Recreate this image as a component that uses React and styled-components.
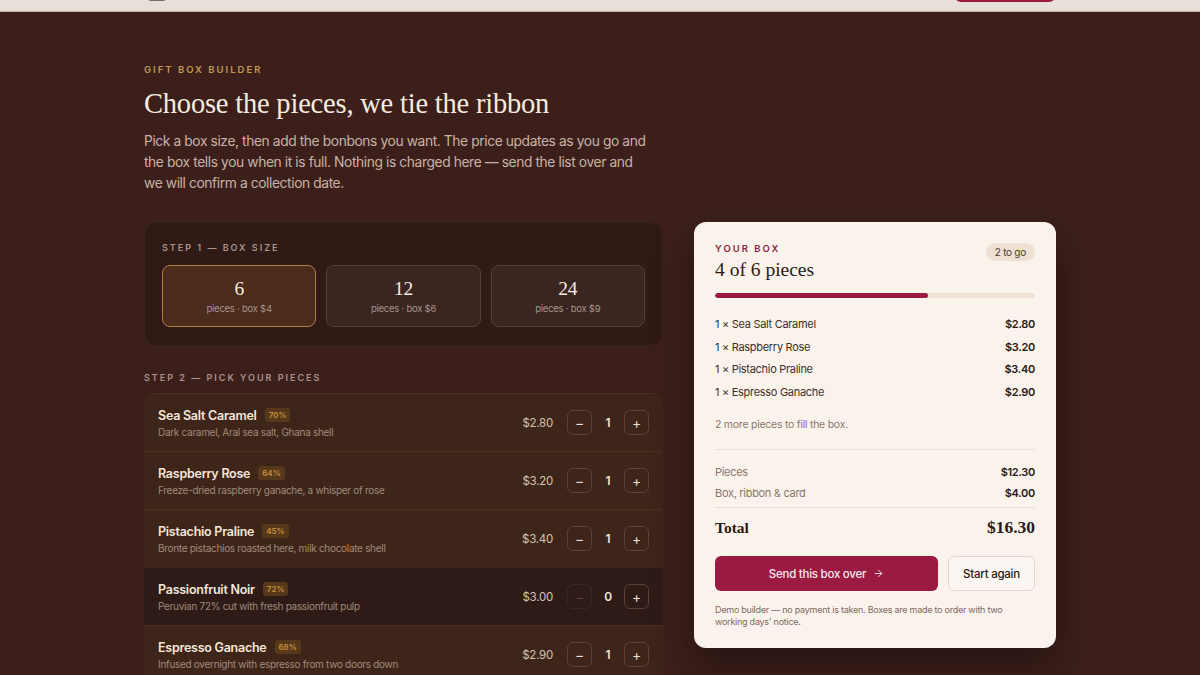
import React from "react";
import styled, { createGlobalStyle } from "styled-components";

const GlobalStyle = createGlobalStyle`
  html, body {
    margin: 0;
    padding: 0;
    background: #3c1f1b;
    font-family: "Inter", "Liberation Sans", sans-serif;
    letter-spacing: -0.25px;
    -webkit-font-smoothing: antialiased;
  }
  * { box-sizing: border-box; }
  button { letter-spacing: inherit; }
`;

const SERIF = `"Liberation Serif", "DejaVu Serif", serif`;

const TopBar = styled.header`
  height: 12px;
  background: #e8e0d8;
  border-bottom: 1px solid #c2b2a3;
  overflow: hidden;
  display: flex;
  align-items: flex-end;
  justify-content: space-between;
  padding: 0 145px 0 148px;
`;

const LogoStub = styled.div`
  width: 18px;
  height: 30px;
  margin-bottom: 10px;
  border-radius: 3px;
  background: #7a6a60;
`;

const NavButton = styled.div`
  width: 100px;
  height: 34px;
  margin-bottom: 9px;
  border-radius: 6px;
  background: #9a1a42;
`;

const Page = styled.main`
  width: 912px;
  margin: 0 auto;
  padding: 52px 0 40px;
`;

const Eyebrow = styled.div`
  font-size: 9.5px;
  font-weight: 600;
  letter-spacing: 2px;
  text-transform: uppercase;
  color: ${(p) => p.color || "#c39a55"};
`;

const Heading = styled.h1`
  font-family: ${SERIF};
  font-weight: 400;
  font-size: 28.5px;
  line-height: 34px;
  letter-spacing: -0.2px;
  color: #f6ebdf;
  margin: 12px 0 10px;
`;

const Intro = styled.p`
  font-size: 13.8px;
  line-height: 21px;
  letter-spacing: -0.4px;
  color: #c7b3a5;
  margin: 0;
  max-width: 505px;
`;

const Layout = styled.div`
  display: grid;
  grid-template-columns: 519px 362px;
  gap: 31px;
  margin-top: 28px;
  align-items: start;
`;

const Column = styled.div`
  display: flex;
  flex-direction: column;
`;

const StepPanel = styled.section`
  background: #2f1a16;
  border-radius: 12px;
  padding: 20px 18px 19px;
  box-shadow: inset 0 0 0 1px rgba(255, 220, 190, 0.05);
`;

const StepLabel = styled.div`
  font-size: 9px;
  font-weight: 600;
  letter-spacing: 2px;
  text-transform: uppercase;
  color: #a8948a;
  margin: ${(p) => p.margin || "0"};
`;

const SizeGrid = styled.div`
  display: grid;
  grid-template-columns: repeat(3, 1fr);
  gap: 10px;
  margin-top: 12px;
`;

const SizeOption = styled.button`
  height: 62px;
  border-radius: 8px;
  border: 1px solid ${(p) => (p.active ? "#b0823f" : "#54403a")};
  background: ${(p) => (p.active ? "#4a2b1c" : "#3a2521")};
  display: flex;
  flex-direction: column;
  align-items: center;
  justify-content: center;
  gap: 3px;
  cursor: pointer;
  font-family: inherit;
`;

const SizeNumber = styled.span`
  font-family: ${SERIF};
  font-size: 19.5px;
  line-height: 22px;
  color: #f6ebdf;
`;

const SizeNote = styled.span`
  font-size: 9.5px;
  color: #a8948a;
`;

const PieceList = styled.div`
  display: flex;
  flex-direction: column;
  margin-top: 10px;
  border-radius: 10px 10px 0 0;
  overflow: hidden;
`;

const PieceRow = styled.div`
  height: 58px;
  display: flex;
  align-items: center;
  padding: 0 14px;
  background: ${(p) => (p.empty ? "#2e1a16" : "#3e2519")};
  border-top: 1px solid ${(p) => (p.empty ? "#3a2420" : "#4a2f22")};
`;

const PieceInfo = styled.div`
  flex: 1;
  display: flex;
  flex-direction: column;
  gap: 3px;
`;

const PieceName = styled.div`
  display: flex;
  align-items: center;
  gap: 8px;
  font-size: 12.5px;
  font-weight: 600;
  color: #f3e6da;
`;

const Badge = styled.span`
  font-size: 8px;
  font-weight: 600;
  letter-spacing: 0;
  color: #c7903c;
  background: #57381a;
  border-radius: 3px;
  padding: 2px 4px;
`;

const PieceDesc = styled.div`
  font-size: 10px;
  letter-spacing: -0.3px;
  color: #a08a7c;
`;

const Price = styled.div`
  font-size: 11.5px;
  color: #d3c2b4;
  margin-right: 14px;
`;

const Stepper = styled.div`
  display: flex;
  align-items: center;
`;

const StepButton = styled.button`
  width: 25px;
  height: 25px;
  border-radius: 6px;
  border: 1px solid ${(p) => (p.disabled ? "#3a2622" : "#5c4236")};
  background: transparent;
  color: ${(p) => (p.disabled ? "#5a443c" : "#eadfd4")};
  font-size: 14px;
  line-height: 1;
  display: flex;
  align-items: center;
  justify-content: center;
  padding: 0;
  font-family: inherit;
`;

const Qty = styled.span`
  width: 32px;
  text-align: center;
  font-size: 12px;
  font-weight: 600;
  color: #f3e6da;
`;

const Card = styled.aside`
  background: #faf3ec;
  border-radius: 12px;
  padding: 21px 21px 20px;
  box-shadow: 0 18px 40px rgba(0, 0, 0, 0.35);
`;

const CardHead = styled.div`
  display: flex;
  justify-content: space-between;
  align-items: flex-start;
`;

const CardTitle = styled.div`
  font-family: ${SERIF};
  font-size: 19.5px;
  line-height: 22px;
  letter-spacing: 0;
  color: #2a1a14;
  margin-top: 5px;
`;

const Pill = styled.span`
  font-size: 10px;
  color: #4a3a30;
  background: #efe0d4;
  border-radius: 10px;
  padding: 3px 9px;
`;

const Progress = styled.div`
  height: 5px;
  border-radius: 3px;
  background: #efe1d6;
  margin: 12px 0 15px;
  overflow: hidden;
`;

const ProgressFill = styled.div`
  height: 100%;
  background: #9a1a42;
  border-radius: 3px;
`;

const Line = styled.div`
  display: flex;
  justify-content: space-between;
  align-items: center;
  font-size: 11px;
  letter-spacing: -0.3px;
  line-height: ${(p) => (p.muted ? "21px" : "22.5px")};
  color: ${(p) => (p.muted ? "#8a766a" : "#3e2f27")};
`;

const Amount = styled.span`
  font-weight: 600;
  color: #2a1a14;
`;

const Hint = styled.div`
  font-size: 10.5px;
  color: #8a766a;
  margin: 15px 0 18px;
`;

const Divider = styled.hr`
  border: none;
  border-top: 1px solid #ebe0d6;
  margin: ${(p) => p.margin || "0"};
`;

const TotalRow = styled.div`
  display: flex;
  justify-content: space-between;
  align-items: center;
  font-family: ${SERIF};
  letter-spacing: 0;
  color: #2a1a14;
  padding: 9px 0 0;
`;

const TotalLabel = styled.span`
  font-size: 15.5px;
  font-weight: 600;
`;

const TotalValue = styled.span`
  font-size: 17.5px;
  font-weight: 600;
`;

const Actions = styled.div`
  display: grid;
  grid-template-columns: 1fr 87px;
  gap: 10px;
  margin-top: 18px;
`;

const PrimaryButton = styled.button`
  height: 35px;
  border-radius: 6px;
  border: none;
  background: #9a1a42;
  color: #f8e8ee;
  font-family: inherit;
  font-size: 11.5px;
  font-weight: 500;
  display: flex;
  align-items: center;
  justify-content: center;
  gap: 7px;
`;

const GhostButton = styled.button`
  height: 35px;
  border-radius: 6px;
  border: 1px solid #e2d6cc;
  background: #fbf6f1;
  color: #2a1a14;
  font-family: inherit;
  font-size: 11.5px;
  font-weight: 500;
`;

const Footnote = styled.p`
  font-size: 9px;
  line-height: 12px;
  color: #7e6a60;
  margin: 13px 0 0;
`;

const sizes = [
  { n: 6, box: 4 },
  { n: 12, box: 6 },
  { n: 24, box: 9 },
];

const pieces = [
  { name: "Sea Salt Caramel", pct: "70%", desc: "Dark caramel, Aral sea salt, Ghana shell", price: 2.8, qty: 1 },
  { name: "Raspberry Rose", pct: "64%", desc: "Freeze-dried raspberry ganache, a whisper of rose", price: 3.2, qty: 1 },
  { name: "Pistachio Praline", pct: "45%", desc: "Bronte pistachios roasted here, milk chocolate shell", price: 3.4, qty: 1 },
  { name: "Passionfruit Noir", pct: "72%", desc: "Peruvian 72% cut with fresh passionfruit pulp", price: 3.0, qty: 0 },
  { name: "Espresso Ganache", pct: "68%", desc: "Infused overnight with espresso from two doors down", price: 2.9, qty: 1 },
];

const money = (v) => `$${v.toFixed(2)}`;

const Arrow = () => (
  <svg width="11" height="11" viewBox="0 0 24 24" fill="none" stroke="currentColor" strokeWidth="2" strokeLinecap="round" strokeLinejoin="round">
    <path d="M5 12h14" />
    <path d="m12 5 7 7-7 7" />
  </svg>
);

export default function App() {
  const boxSize = 6;
  const chosen = pieces.filter((p) => p.qty > 0);
  const count = chosen.reduce((s, p) => s + p.qty, 0);
  const subtotal = chosen.reduce((s, p) => s + p.qty * p.price, 0);
  const boxPrice = 4;

  return (
    <>
      <GlobalStyle />
      <TopBar>
        <LogoStub />
        <NavButton />
      </TopBar>
      <Page>
        <Eyebrow>Gift box builder</Eyebrow>
        <Heading>Choose the pieces, we tie the ribbon</Heading>
        <Intro>
          Pick a box size, then add the bonbons you want. The price updates as you go and
          the box tells you when it is full. Nothing is charged here — send the list over and
          we will confirm a collection date.
        </Intro>
        <Layout>
          <Column>
            <StepPanel>
              <StepLabel>Step 1 — Box size</StepLabel>
              <SizeGrid>
                {sizes.map((s) => (
                  <SizeOption key={s.n} active={s.n === boxSize}>
                    <SizeNumber>{s.n}</SizeNumber>
                    <SizeNote>pieces · box ${s.box}</SizeNote>
                  </SizeOption>
                ))}
              </SizeGrid>
            </StepPanel>
            <StepLabel margin="26px 0 0">Step 2 — Pick your pieces</StepLabel>
            <PieceList>
              {pieces.map((p) => (
                <PieceRow key={p.name} empty={p.qty === 0}>
                  <PieceInfo>
                    <PieceName>
                      {p.name}
                      <Badge>{p.pct}</Badge>
                    </PieceName>
                    <PieceDesc>{p.desc}</PieceDesc>
                  </PieceInfo>
                  <Price>{money(p.price)}</Price>
                  <Stepper>
                    <StepButton disabled={p.qty === 0}>−</StepButton>
                    <Qty>{p.qty}</Qty>
                    <StepButton>+</StepButton>
                  </Stepper>
                </PieceRow>
              ))}
            </PieceList>
          </Column>
          <Card>
            <CardHead>
              <div>
                <Eyebrow color="#8e1d3f">Your box</Eyebrow>
                <CardTitle>
                  {count} of {boxSize} pieces
                </CardTitle>
              </div>
              <Pill>{boxSize - count} to go</Pill>
            </CardHead>
            <Progress>
              <ProgressFill style={{ width: `${(count / boxSize) * 100}%` }} />
            </Progress>
            {chosen.map((p) => (
              <Line key={p.name}>
                <span>
                  {p.qty} × {p.name}
                </span>
                <Amount>{money(p.price * p.qty)}</Amount>
              </Line>
            ))}
            <Hint>{boxSize - count} more pieces to fill the box.</Hint>
            <Divider margin="0 0 12px" />
            <Line muted>
              <span>Pieces</span>
              <Amount>{money(subtotal)}</Amount>
            </Line>
            <Line muted>
              <span>Box, ribbon &amp; card</span>
              <Amount>{money(boxPrice)}</Amount>
            </Line>
            <Divider margin="3px 0 0" />
            <TotalRow>
              <TotalLabel>Total</TotalLabel>
              <TotalValue>{money(subtotal + boxPrice)}</TotalValue>
            </TotalRow>
            <Actions>
              <PrimaryButton>
                Send this box over <Arrow />
              </PrimaryButton>
              <GhostButton>Start again</GhostButton>
            </Actions>
            <Footnote>
              Demo builder — no payment is taken. Boxes are made to order with two
              working days' notice.
            </Footnote>
          </Card>
        </Layout>
      </Page>
    </>
  );
}
